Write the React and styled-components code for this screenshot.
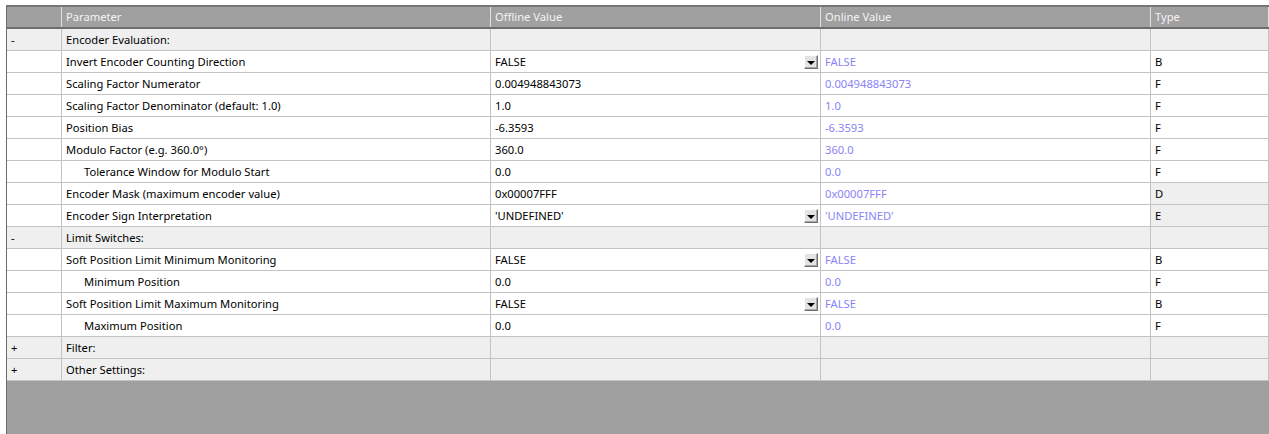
import React from "react";
import styled, { createGlobalStyle } from "styled-components";

const Global = createGlobalStyle`
  html, body { margin: 0; background: #fff; }
  body { font-family: "Noto Sans", "Liberation Sans", sans-serif; font-size: 11.2px; }
`;

const COLS = "55px 429px 330px 330px 1fr";

const Frame = styled.div`
  margin: 5px 0 0 6px;
  height: calc(100vh - 5px);
  box-sizing: border-box;
  border-top: 2px solid #767676;
  border-left: 1px solid #6c6c6c;
  background: #a0a0a0;
  overflow: hidden;
`;

const Header = styled.div`
  display: grid;
  grid-template-columns: ${COLS};
  height: 22px;
  box-sizing: border-box;
  border-bottom: 2px solid #6e6e6e;
  background: #a0a0a0;
  color: #f4f4f4;
`;

const HeadCell = styled.div`
  border-right: 1px solid #e2e2e2;
  padding-left: 4px;
  line-height: 20px;
  white-space: nowrap;
  overflow: hidden;
`;

const Row = styled.div`
  display: grid;
  grid-template-columns: ${COLS};
  height: 22px;
  box-sizing: border-box;
  border-bottom: 1px solid #c3c3c3;
  background: ${(p) => (p.$group ? "#efefef" : "#fff")};
`;

const Cell = styled.div`
  position: relative;
  border-right: 1px solid #c3c3c3;
  padding-left: ${(p) => (p.$indent ? 22 : 4)}px;
  line-height: 21px;
  white-space: nowrap;
  overflow: hidden;
  color: ${(p) => (p.$online ? "#8a84f6" : "#000")};
  background: ${(p) => (p.$shade ? "#efefef" : "transparent")};
`;

const DropButton = styled.span`
  position: absolute;
  right: 2px;
  top: 4px;
  width: 14px;
  height: 14px;
  box-sizing: border-box;
  background: #e3e3e3;
  border-top: 1px solid #fdfdfd;
  border-left: 1px solid #fdfdfd;
  border-right: 1px solid #6e6e6e;
  border-bottom: 1px solid #6e6e6e;
  box-shadow: inset -1px -1px 0 #a8a8a8;
  display: flex;
  align-items: center;
  justify-content: center;

  &::after {
    content: "";
    border-left: 4px solid transparent;
    border-right: 4px solid transparent;
    border-top: 4px solid #000;
    margin-top: 1px;
  }
`;

const rows = [
  { group: "-", name: "Encoder Evaluation:" },
  { name: "Invert Encoder Counting Direction", value: "FALSE", type: "B", drop: true },
  { name: "Scaling Factor Numerator", value: "0.004948843073", type: "F" },
  { name: "Scaling Factor Denominator (default: 1.0)", value: "1.0", type: "F" },
  { name: "Position Bias", value: "-6.3593", type: "F" },
  { name: "Modulo Factor (e.g. 360.0°)", value: "360.0", type: "F" },
  { name: "Tolerance Window for Modulo Start", value: "0.0", type: "F", indent: true },
  { name: "Encoder Mask (maximum encoder value)", value: "0x00007FFF", type: "D", shade: true },
  { name: "Encoder Sign Interpretation", value: "'UNDEFINED'", type: "E", drop: true, shade: true },
  { group: "-", name: "Limit Switches:" },
  { name: "Soft Position Limit Minimum Monitoring", value: "FALSE", type: "B", drop: true },
  { name: "Minimum Position", value: "0.0", type: "F", indent: true },
  { name: "Soft Position Limit Maximum Monitoring", value: "FALSE", type: "B", drop: true },
  { name: "Maximum Position", value: "0.0", type: "F", indent: true },
  { group: "+", name: "Filter:" },
  { group: "+", name: "Other Settings:" },
];

export default function App() {
  return (
    <>
      <Global />
      <Frame>
        <Header>
          <HeadCell />
          <HeadCell>Parameter</HeadCell>
          <HeadCell>Offline Value</HeadCell>
          <HeadCell>Online Value</HeadCell>
          <HeadCell>Type</HeadCell>
        </Header>
        {rows.map((r, i) =>
          r.group ? (
            <Row key={i} $group>
              <Cell>{r.group}</Cell>
              <Cell>{r.name}</Cell>
              <Cell />
              <Cell />
              <Cell />
            </Row>
          ) : (
            <Row key={i}>
              <Cell />
              <Cell $indent={r.indent}>{r.name}</Cell>
              <Cell>
                {r.value}
                {r.drop && <DropButton />}
              </Cell>
              <Cell $online>{r.value}</Cell>
              <Cell $shade={r.shade}>{r.type}</Cell>
            </Row>
          )
        )}
      </Frame>
    </>
  );
}
